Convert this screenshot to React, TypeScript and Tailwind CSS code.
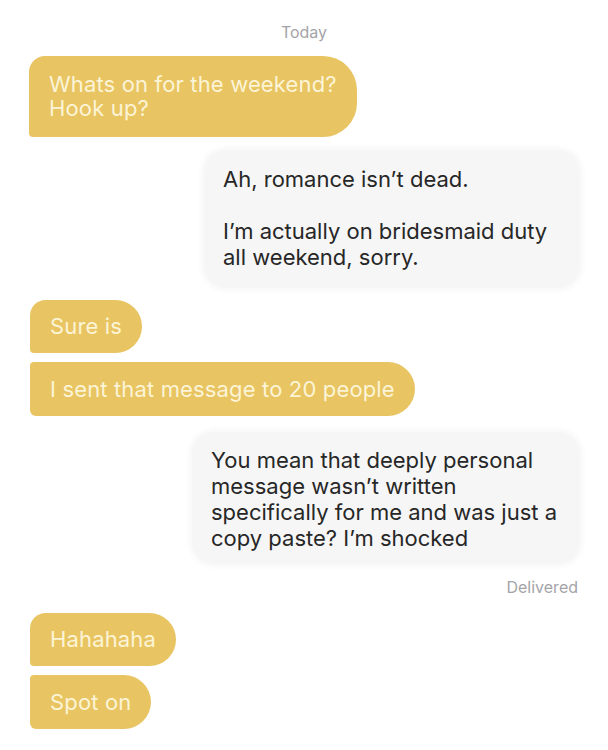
const font = { fontFamily: "Inter, 'Noto Sans', sans-serif" };

const YellowBubble = ({ lines, shape, pad }: { lines: string[]; shape: string; pad: string }) => (
  <div
    className={`self-start bg-[#e8c462] text-[#fcf4d6] text-[22px] tracking-[0.15px] leading-[24px] px-[20px] ${pad} ${shape}`}
  >
    {lines.map((l, i) => (
      <div key={i}>{l}</div>
    ))}
  </div>
);

const GrayBubble = ({ lines, width, pad }: { lines: string[]; width: string; pad: string }) => (
  <div
    className={`self-end bg-[#f6f6f6] text-[#272727] text-[22px] leading-[26px] pl-[19px] pr-4 rounded-[22px] shadow-[0_0_6px_2px_#f6f6f6] ${pad} ${width}`}
  >
    {lines.map((l, i) => (
      <div key={i} className="min-h-[26px]">
        {l}
      </div>
    ))}
  </div>
);

export default function App() {
  return (
    <div className="w-[608px] h-[750px] bg-white overflow-hidden flex flex-col px-[28px]" style={font}>
      <div className="text-center text-[16px] text-[#a4a4a8] pt-[22px] pb-[14px] leading-[20px]">Today</div>

      <YellowBubble
        lines={["Whats on for the weekend?", "Hook up?"]}
        pad="pt-[16px] pb-[17px]"
        shape="rounded-tl-[16px] rounded-bl-[4px] rounded-r-[34px] ml-[1px]"
      />

      <div className="h-[13px]" />
      <GrayBubble
        width="w-[376px]"
        pad="pt-[16px] pb-[18px]"
        lines={["Ah, romance isn’t dead.", "", "I’m actually on bridesmaid duty", "all weekend, sorry."]}
      />

      <div className="h-[12px]" />
      <YellowBubble
        lines={["Sure is"]}
        pad="pt-[14px] pb-[15px]"
        shape="rounded-tl-[16px] rounded-bl-[4px] rounded-r-[27px] ml-[2px]"
      />
      <div className="h-[9px]" />
      <YellowBubble
        lines={["I sent that message to 20 people"]}
        pad="pt-[15px] pb-[15px]"
        shape="rounded-tl-[4px] rounded-bl-[6px] rounded-r-[27px] ml-[2px]"
      />

      <div className="h-[16px]" />
      <GrayBubble
        width="w-[388px]"
        pad="pt-[15px] pb-[13px]"
        lines={[
          "You mean that deeply personal",
          "message wasn’t written",
          "specifically for me and was just a",
          "copy paste? I’m shocked",
        ]}
      />

      <div className="self-end text-[16px] text-[#a4a4a8] leading-[20px] mt-[13px] mr-[2px]">Delivered</div>

      <div className="h-[16px]" />
      <YellowBubble
        lines={["Hahahaha"]}
        pad="pt-[14px] pb-[15px]"
        shape="rounded-tl-[16px] rounded-bl-[4px] rounded-r-[27px] ml-[2px]"
      />
      <div className="h-[9px]" />
      <YellowBubble
        lines={["Spot on"]}
        pad="pt-[15px] pb-[15px]"
        shape="rounded-tl-[4px] rounded-bl-[6px] rounded-r-[27px] ml-[2px]"
      />
    </div>
  );
}
